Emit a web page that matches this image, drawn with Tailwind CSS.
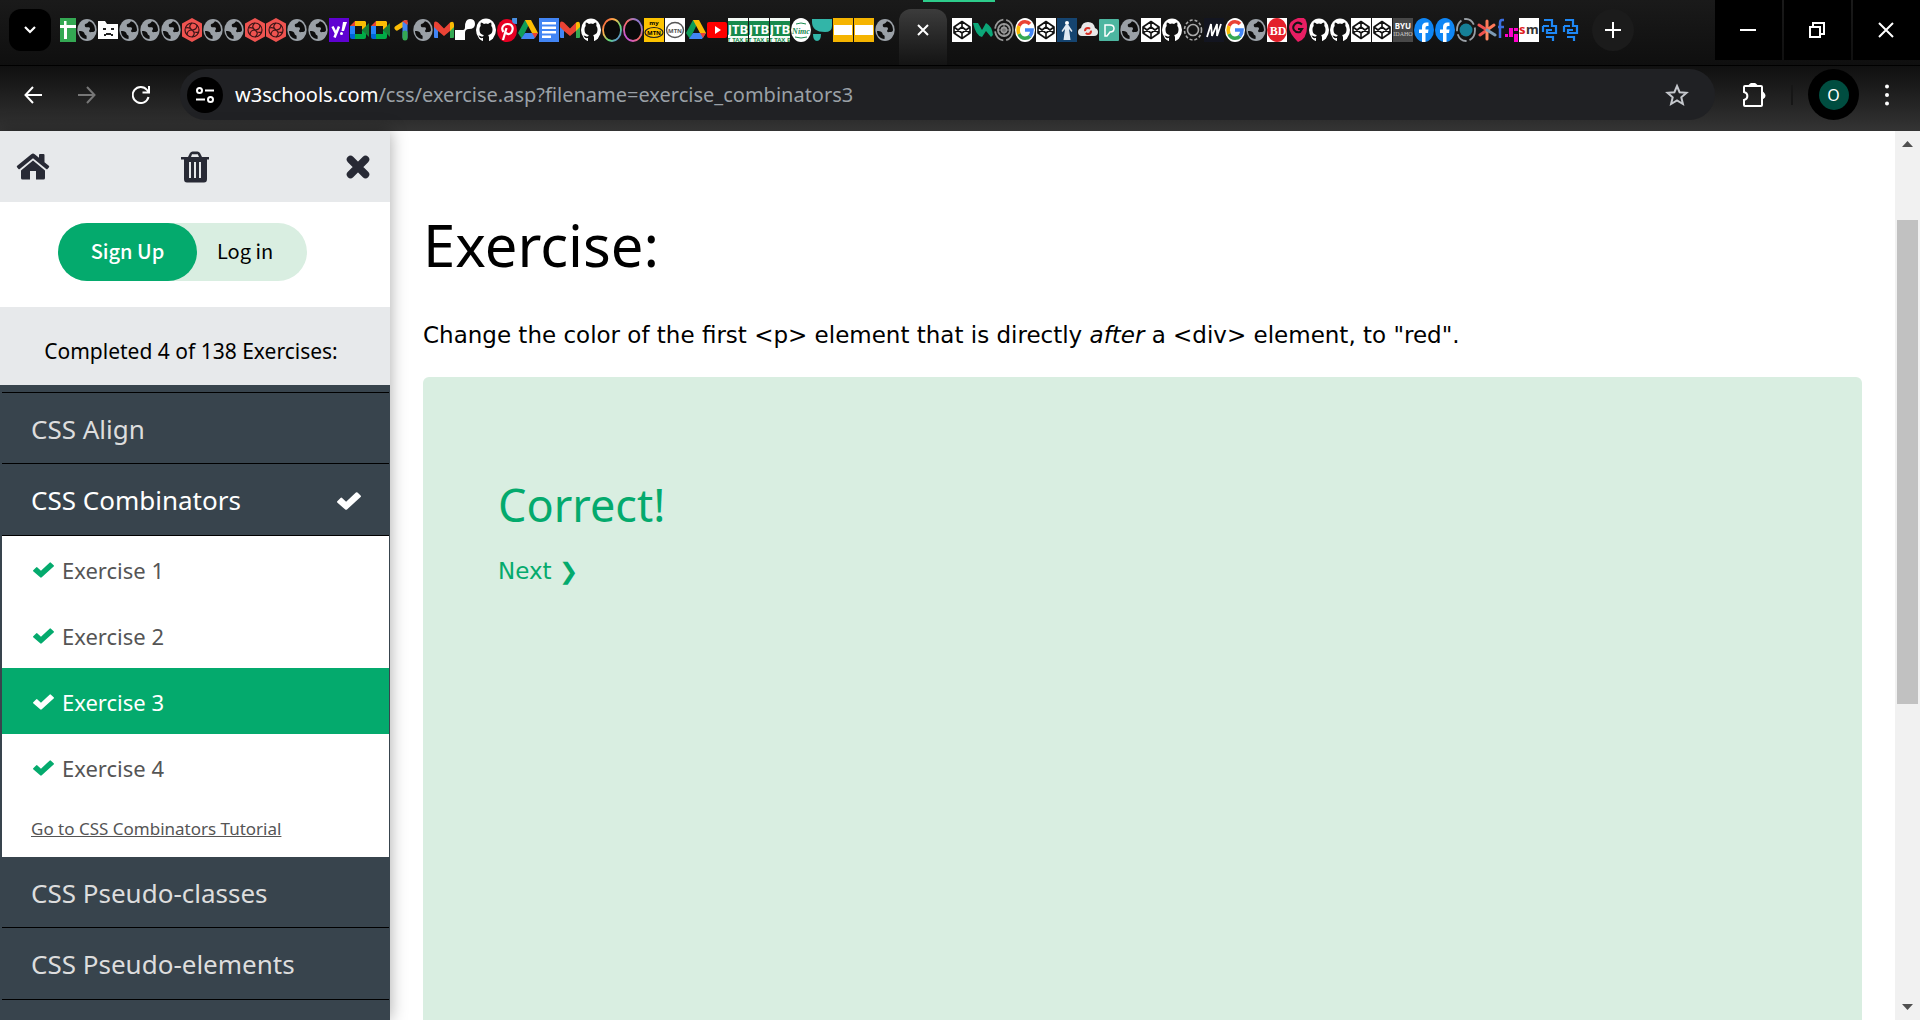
<!DOCTYPE html>
<html lang="en">
<head>
<meta charset="utf-8">
<meta name="viewport" content="width=device-width, initial-scale=1">
<title>CSS Exercise</title>
<script src="https://cdn.jsdelivr.net/npm/@tailwindcss/browser@4"></script>
</head>
<body class="flex h-screen flex-col overflow-hidden bg-white font-['Noto_Sans',sans-serif] text-black">

<!-- Gradients shared by the favicons -->
<svg class="absolute size-0" aria-hidden="true">
  <linearGradient id="rainbow" x1="0" y1="0" x2="1" y2="1"><stop offset="0" stop-color="#f44336"/><stop offset=".35" stop-color="#ffb74d"/><stop offset=".65" stop-color="#64dd7a"/><stop offset="1" stop-color="#5c6bff"/></linearGradient>
  <linearGradient id="sunset" x1="1" y1="0" x2="0" y2="1"><stop offset="0" stop-color="#5c7cff"/><stop offset=".5" stop-color="#ff6f61"/><stop offset="1" stop-color="#b14dff"/></linearGradient>
</svg>

<!-- Favicon sprite -->
<svg class="hidden" aria-hidden="true">
  <symbol id="globe" viewBox="0 0 20 24"><ellipse cx="10" cy="12" rx="9.700" ry="11" fill="#9aa0a6"/><path d="M2 13c2 0 4 .3 5 1.500.8 1 .2 1.800 1.500 2.500 1.500.6 1.200 1.500 1 4C5 20.500 2 17.500 2 13zM12 3.200c-1 .8-1 1.800-2.200 2.200-1.500.3-2.300.6-2 2.300.2 1 .8 1.500 2 1.500h2c1 0 1.500 1.200 1 2.200-.5.8-1 1.100-.6 2.200.4 1 1.800.4 3 .4 1.500 0 2.800-.5 2.800-2 0-4.600-2.500-8-6-8.800z" fill="#0e0e0e"/></symbol>
  <symbol id="sheets" viewBox="0 0 20 24"><path d="M0 0h16v24H0z" fill="#34a853"/><path d="M0 7h16v3H7v11H4V10H0zM4 3h2.500v4H4z" fill="#fff"/></symbol>
  <symbol id="sad" viewBox="0 0 20 24"><path d="M0 3h7l2 3h11v15H0z" fill="#fff"/><path d="M5 10h3v2H5zM13 10h3v2h-3zM6 18v-2h2v-1h5v1h2v2h-2v-1H8v1z" fill="#222"/></symbol>
  <symbol id="swirl" viewBox="0 0 20 24"><path d="M10 0l10 5.500v13L10 24 0 18.500v-13z" fill="#ef5350"/><g fill="none" stroke="#3b1517" stroke-width="1.200"><circle cx="10" cy="12" r="7"/><path d="M10 5c-3 2-3 5 0 7 3 2 3 5 0 7M3.500 10c3-1 5 0 6.500 2 1.500 2 4 3 6.500 2M5 17c0-3 2-5 5-5s5-2 5-5"/></g></symbol>
  <symbol id="yahoo" viewBox="0 0 20 24"><path d="M0 0h20v24H0z" fill="#5f01d1"/><path d="M3.500 8.500l3.500 7M10 8.500l-4.500 11" stroke="#fff" stroke-width="2.500"/><path d="M14 4h4l-3 9h-2.500z" fill="#fff"/><circle cx="12.500" cy="15.500" r="1.500" fill="#fff"/></symbol>
  <symbol id="meet" viewBox="0 0 20 24"><path d="M5 3v5H0z" fill="#ea4335"/><path d="M5 3h10l1 1v5l-4 3V8H5z" fill="#fbbc04"/><path d="M0 8h5v8H0z" fill="#2684fc"/><path d="M0 16h5v5H2q-2 0-2-2z" fill="#0066da"/><path d="M5 16h7v-4l4 3v4q0 2-2 2H5z" fill="#00ac47"/><path d="M12 12l7-7v14z" fill="#188038"/></symbol>
  <symbol id="one" viewBox="0 0 20 24"><path d="M5 10l8-5" stroke="#fbbc04" stroke-width="5" stroke-linecap="round"/><path d="M13 5v14" stroke="#4285f4" stroke-width="5" stroke-linecap="round"/><path d="M13 15v5" stroke="#34a853" stroke-width="5" stroke-linecap="round"/><path d="M10 3l5.500-1v5z" fill="#ea4335"/></symbol>
  <symbol id="gmail" viewBox="0 0 20 24"><path d="M0 6l4 3v11H1q-1 0-1-1z" fill="#4285f4"/><path d="M16 9l4-3v13q0 1-1 1h-3z" fill="#34a853"/><path d="M16 4.500q4-2 4 2V9l-4 4z" fill="#fbbc04"/><path d="M0 6q0-4 4-1.500l6 6 6-6V13l-6 5-6-5-4-4z" fill="#ea4335"/></symbol>
  <symbol id="route" viewBox="0 0 20 24"><path d="M0 22V12h8q2 0 2-3 0-8 5-8 5 0 5 5 0 5-6 5-4 0-4 4v7z" fill="#fff"/></symbol>
  <symbol id="github" viewBox="0 0 20 24"><ellipse cx="10" cy="12" rx="10" ry="11.500" fill="#fff"/><path d="M7 24v-4c-2.500.5-3.500-.5-4.500-2.500 2 0 2.500 1.500 4.500 1l.8-1.500C4.500 16.500 3.500 14.500 3.500 11.500c0-1.500.4-2.500 1.200-3.500-.3-1.200-.2-2.500.2-3.500 1.300 0 2.200.8 3 1.400q2.100-.6 4.200 0c.8-.6 1.700-1.400 3-1.400.4 1 .5 2.300.2 3.500.8 1 1.200 2 1.200 3.500 0 3-1 5-4.300 5.500l.8 2v5z" fill="#111"/></symbol>
  <symbol id="pinterest" viewBox="0 0 20 24"><ellipse cx="10" cy="12.500" rx="10" ry="11.500" fill="#e60023"/><path d="M6 22l3.500-12M6.500 14c-3-4 0-8 4-8 5 0 6 4 4.500 7.500s-5 3-6 1" fill="none" stroke="#fff" stroke-width="2.200"/><circle cx="19" cy="2" r="4" fill="#4a90e2"/></symbol>
  <symbol id="drive" viewBox="0 0 20 24"><path d="M7 2h6L4 21l-4-6z" fill="#0f9d58"/><path d="M7 2h6l7 13h-6z" fill="#fbbc04"/><path d="M3 21l4-6h13l-4 6z" fill="#4285f4"/><path d="M14 15h6l-3 5z" fill="#ea4335"/></symbol>
  <symbol id="docs" viewBox="0 0 20 24"><path d="M0 0h20v24H0z" fill="#4285f4"/><path d="M3 4h14v2.500H3zM3 8.500h14V11H3zM3 13h14v2.500H3zM3 17.500h9V20H3z" fill="#fff"/></symbol>
  <symbol id="ring" viewBox="0 0 20 24"><ellipse cx="10" cy="12" rx="9" ry="11" fill="#0a0a0a" stroke="url(#rainbow)" stroke-width="1.800"/></symbol>
  <symbol id="ring2" viewBox="0 0 20 24"><ellipse cx="10" cy="12" rx="9" ry="11" fill="#0a0a0a" stroke="url(#sunset)" stroke-width="1.800"/></symbol>
  <symbol id="mymtn" viewBox="0 0 20 24"><path d="M0 0h20v24H0z" fill="#fdc300"/><ellipse cx="10" cy="14.500" rx="9" ry="5" fill="none" stroke="#222" stroke-width="1.200"/><text x="10" y="7" font-size="6" font-weight="700" text-anchor="middle">my</text><text x="10" y="17" font-size="6" font-weight="700" text-anchor="middle">MTN</text></symbol>
  <symbol id="mtn" viewBox="0 0 20 24"><path d="M0 0h20v24H0z" fill="#fff"/><ellipse cx="10" cy="12" rx="8.500" ry="7.500" fill="none" stroke="#555" stroke-width="1.400"/><text x="10" y="14.500" font-size="6" font-weight="700" fill="#555" text-anchor="middle">MTN</text></symbol>
  <symbol id="youtube" viewBox="0 0 20 24"><rect y="4" width="20" height="16" rx="2" fill="#f00"/><path d="M8 8l6 4-6 4z" fill="#fff"/></symbol>
  <symbol id="jtb" viewBox="0 0 20 24"><path d="M0 0h20v24H0z" fill="#f4faf6"/><path d="M0 3h20v15H0z" fill="#178a4c"/><text x="10" y="16" font-size="13" font-weight="700" fill="#fff" text-anchor="middle">JTB</text><text x="10" y="23.500" font-size="6" font-weight="700" fill="#178a4c" text-anchor="middle">T TAX B</text></symbol>
  <symbol id="nimc" viewBox="0 0 20 24"><ellipse cx="10" cy="12" rx="10" ry="12" fill="#fff"/><text x="10" y="16" font-size="8" font-weight="700" font-style="italic" fill="#1a8a50" text-anchor="middle" font-family="Liberation Serif">Nimc</text><path d="M4 19q6 2 12 0M5 6q5-2 10 0" stroke="#1a8a50" fill="none"/></symbol>
  <symbol id="teal" viewBox="0 0 20 24"><path d="M0 1h20v7q0 6-7 6Q0 14 0 4zM1 16h8q0 7-4 7-4 0-4-7z" fill="#32b5a8"/></symbol>
  <symbol id="slides" viewBox="0 0 20 24"><path d="M0 0h20v24H0z" fill="#f5b400"/><path d="M1 7h18v10H1z" fill="#fff"/></symbol>
  <symbol id="codepen" viewBox="0 0 20 24"><path d="M0 0h20v24H0z" fill="#fff"/><path d="M10 3.500l8 5.500v6l-8 5.500L2 15V9zM10 3.500V9M10 15v5.500M2 9l8 6 8-6M2 15l8-6 8 6" fill="none" stroke="#111" stroke-width="1.600" stroke-linejoin="round"/></symbol>
  <symbol id="wave" viewBox="0 0 20 24"><path d="M0 5h5l4 7 4-7q6 3 7 12l-2 2-5-6-4 6q-6-1-9-14z" fill="#0ca678"/></symbol>
  <symbol id="target" viewBox="0 0 20 24"><g fill="none" stroke="#999" stroke-width="1.800"><ellipse cx="10" cy="12" rx="9" ry="10.500" stroke-dasharray="13 3"/><circle cx="10" cy="12" r="6"/><circle cx="10" cy="12" r="2.500"/><path d="M10 5v14M3 12h14" stroke-width="1"/></g></symbol>
  <symbol id="google" viewBox="0 0 20 24"><ellipse cx="10" cy="12" rx="10" ry="12" fill="#fff"/><g fill="none" stroke-width="3.600"><path d="M4 8q2-4.200 6-4.200 3 0 5 2.200" stroke="#ea4335"/><path d="M3.900 8q-1.500 4 0 8" stroke="#fbbc04"/><path d="M4 16q2 4.200 6 4.200 3 0 5-2" stroke="#34a853"/><path d="M10 12h7q0 4-2.200 6.300" stroke="#4285f4"/></g></symbol>
  <symbol id="statue" viewBox="0 0 20 24"><path d="M0 0h20v24H0z" fill="#154470"/><circle cx="10" cy="5" r="2" fill="#fff"/><path d="M8.500 7h3l4 6-1 1-2.500-3 1.500 11h-7l1.500-11-2.500 3-1-1z" fill="#dfe8f2"/></symbol>
  <symbol id="cloud" viewBox="0 0 20 24"><path d="M4 18q-4 0-4-4 0-3 3-4 1-6 7-6t7 6q3 1 3 4 0 4-4 4z" fill="#e8e8e8"/><circle cx="10" cy="13" r="3" fill="none" stroke="#d93025" stroke-width="2" stroke-dasharray="7 2"/></symbol>
  <symbol id="pad" viewBox="0 0 20 24"><rect y="1" width="20" height="22" rx="1" fill="#4db6a0"/><path d="M6 18V7h5q4 0 4 3.500T11 14l-3 4z" fill="none" stroke="#fff" stroke-width="1.500"/></symbol>
  <symbol id="dotted" viewBox="0 0 20 24"><g fill="none" stroke="#aaa" stroke-width="1.600"><ellipse cx="10" cy="12" rx="8.500" ry="10" stroke-dasharray="3 2"/><circle cx="10" cy="12" r="5.500"/></g></symbol>
  <symbol id="em" viewBox="0 0 20 24"><path d="M0 0h20v24H0z" fill="#131520"/><path d="M3 19L7 6l1 12 5-12v12l4-12" fill="none" stroke="#fff" stroke-width="1.800"/></symbol>
  <symbol id="bd" viewBox="0 0 20 24"><path d="M0 0h20v24H0z" fill="#fff"/><ellipse cx="10" cy="12" rx="10" ry="12" fill="#e3202b"/><text x="11" y="16.500" font-size="12" font-weight="700" fill="#fff" text-anchor="middle" font-family="Liberation Serif">BD</text></symbol>
  <symbol id="pin" viewBox="0 0 20 24"><path d="M10 24Q1 15 1 9t9-9 9 9-9 15z" fill="#e91e63"/><path d="M14 6.500Q10 3 7 6t-1 6 6 2l2-3h-4" fill="none" stroke="#151515" stroke-width="2"/></symbol>
  <symbol id="byu" viewBox="0 0 20 24"><path d="M0 0h20v24H0z" fill="#484848"/><text x="10" y="11" font-size="8" font-weight="700" fill="#fff" text-anchor="middle">BYU</text><text x="10" y="17.500" font-size="6" fill="#ccc" text-anchor="middle" font-family="Liberation Serif">IDAHO</text></symbol>
  <symbol id="facebook" viewBox="0 0 20 24"><ellipse cx="10" cy="12" rx="10" ry="12" fill="#0f86f5"/><path d="M8 24v-9H5v-3.500h3V9q0-4.500 4.500-4.500h2V8H13q-1.500 0-1.500 1.800v1.700h3L14 15h-2.500v9z" fill="#fff"/></symbol>
  <symbol id="orb" viewBox="0 0 20 24"><ellipse cx="10" cy="12" rx="9" ry="11" fill="none" stroke="#9aa0a6" stroke-width="1.800" stroke-dasharray="12 3"/><circle cx="10" cy="12" r="6.500" fill="#168097"/></symbol>
  <symbol id="star" viewBox="0 0 20 24"><g stroke-width="3" stroke-linecap="round"><path d="M10 12V3M10 12l7-5" stroke="#ff7a59"/><path d="M10 12L2 7M10 12l-7 5" stroke="#ef5350"/><path d="M10 12v9" stroke="#ff8a65"/><path d="M10 12l8 5" stroke="#7e9bb5"/></g></symbol>
  <symbol id="fq" viewBox="0 0 20 24"><path d="M6 2H4q-2 0-2 3v15M0 9h6" fill="none" stroke="#3b6fe0" stroke-width="2.500"/><path d="M7 16h3v3H7zM11 10h4v9h-4zM16 10h4v3h-4zM16 16h4v8h-4z" fill="#f0c"/></symbol>
  <symbol id="sm" viewBox="0 0 20 24"><path d="M0 0h20v24H0z" fill="#fff"/><text x="0" y="16" font-size="13" font-weight="700" fill="#e02020">s</text><text x="7" y="16" font-size="13" font-weight="700" fill="#333">m</text></symbol>
  <symbol id="snake" viewBox="0 0 20 24"><path d="M4 2h8v6h4v7H7v-3h5M3 8v6M3 8h6M6 19h7v4" fill="none" stroke="#1e88f5" stroke-width="2.200"/></symbol>
  <symbol id="check" viewBox="0 0 24 18"><path d="M0 9.500L3.500 6q.8-.8 1.600 0l4 3.800L18.900.6q.8-.8 1.600 0L23.600 3.500q.8.800 0 1.600L10 17.400q-.9.800-1.800 0L.2 10.500z" fill="currentColor"/></symbol>
</svg>

<header>
  <!-- Tab strip -->
  <div class="relative flex h-[66px] items-start border-b border-black bg-linear-to-b from-[#1a1a1a] to-[#0f0f0f]">
    <div class="absolute left-[923px] top-0 h-[2px] w-[72px] bg-[#2dcc8b]"></div>
    <button aria-label="Search tabs" class="ml-[9px] mt-[9px] flex size-[42px] shrink-0 items-center justify-center rounded-xl bg-black">
      <svg class="h-2 w-3" viewBox="0 0 12 8" fill="none" stroke="#fff" stroke-width="2.200"><path d="M1 1l5 5 5-5"/></svg>
    </button>
    <nav aria-label="Tabs before the current one" class="ml-[9px] mt-[18px] flex gap-px [&_svg]:block [&_svg]:h-6 [&_svg]:w-5 [&>button:first-child]:w-4 [&>button:first-child]:overflow-hidden">
      <button aria-label="Sheets"><svg><use href="#sheets"/></svg></button>
      <button aria-label="Tab"><svg><use href="#globe"/></svg></button>
      <button aria-label="Unreachable page"><svg><use href="#sad"/></svg></button>
      <button aria-label="Tab"><svg><use href="#globe"/></svg></button>
      <button aria-label="Tab"><svg><use href="#globe"/></svg></button>
      <button aria-label="Tab"><svg><use href="#globe"/></svg></button>
      <button aria-label="Tab"><svg><use href="#swirl"/></svg></button>
      <button aria-label="Tab"><svg><use href="#globe"/></svg></button>
      <button aria-label="Tab"><svg><use href="#globe"/></svg></button>
      <button aria-label="Tab"><svg><use href="#swirl"/></svg></button>
      <button aria-label="Tab"><svg><use href="#swirl"/></svg></button>
      <button aria-label="Tab"><svg><use href="#globe"/></svg></button>
      <button aria-label="Tab"><svg><use href="#globe"/></svg></button>
      <button aria-label="Yahoo"><svg><use href="#yahoo"/></svg></button>
      <button aria-label="Meet"><svg><use href="#meet"/></svg></button>
      <button aria-label="Meet"><svg><use href="#meet"/></svg></button>
      <button aria-label="Google One"><svg><use href="#one"/></svg></button>
      <button aria-label="Tab"><svg><use href="#globe"/></svg></button>
      <button aria-label="Gmail"><svg><use href="#gmail"/></svg></button>
      <button aria-label="Tab"><svg><use href="#route"/></svg></button>
      <button aria-label="GitHub"><svg><use href="#github"/></svg></button>
      <button aria-label="Pinterest"><svg><use href="#pinterest"/></svg></button>
      <button aria-label="Drive"><svg><use href="#drive"/></svg></button>
      <button aria-label="Docs"><svg><use href="#docs"/></svg></button>
      <button aria-label="Gmail"><svg><use href="#gmail"/></svg></button>
      <button aria-label="GitHub"><svg><use href="#github"/></svg></button>
      <button aria-label="Tab"><svg><use href="#ring"/></svg></button>
      <button aria-label="Tab"><svg><use href="#ring2"/></svg></button>
      <button aria-label="MyMTN"><svg><use href="#mymtn"/></svg></button>
      <button aria-label="MTN"><svg><use href="#mtn"/></svg></button>
      <button aria-label="Drive"><svg><use href="#drive"/></svg></button>
      <button aria-label="YouTube"><svg><use href="#youtube"/></svg></button>
      <button aria-label="JTB"><svg><use href="#jtb"/></svg></button>
      <button aria-label="JTB"><svg><use href="#jtb"/></svg></button>
      <button aria-label="JTB"><svg><use href="#jtb"/></svg></button>
      <button aria-label="NIMC"><svg><use href="#nimc"/></svg></button>
      <button aria-label="Tab"><svg><use href="#teal"/></svg></button>
      <button aria-label="Slides"><svg><use href="#slides"/></svg></button>
      <button aria-label="Slides"><svg><use href="#slides"/></svg></button>
      <button aria-label="Tab"><svg><use href="#globe"/></svg></button>
    </nav>
    <div class="ml-1 mt-[9px] flex h-14 w-12 shrink-0 justify-center rounded-t-xl bg-linear-to-b from-[#3c3c3c] to-[#141414] pt-[15px]">
      <button aria-label="Close tab" class="size-3"><svg viewBox="0 0 12 12" stroke="#fff" stroke-width="2"><path d="M1 1l10 10M11 1L1 11"/></svg></button>
    </div>
    <nav aria-label="Tabs after the current one" class="ml-[5px] mt-[18px] flex gap-px [&_svg]:block [&_svg]:h-6 [&_svg]:w-5">
      <button aria-label="CodePen"><svg><use href="#codepen"/></svg></button>
      <button aria-label="Tab"><svg><use href="#wave"/></svg></button>
      <button aria-label="Tab"><svg><use href="#target"/></svg></button>
      <button aria-label="Google"><svg><use href="#google"/></svg></button>
      <button aria-label="CodePen"><svg><use href="#codepen"/></svg></button>
      <button aria-label="Tab"><svg><use href="#statue"/></svg></button>
      <button aria-label="Tab"><svg><use href="#cloud"/></svg></button>
      <button aria-label="Tab"><svg><use href="#pad"/></svg></button>
      <button aria-label="Tab"><svg><use href="#globe"/></svg></button>
      <button aria-label="CodePen"><svg><use href="#codepen"/></svg></button>
      <button aria-label="GitHub"><svg><use href="#github"/></svg></button>
      <button aria-label="Tab"><svg><use href="#dotted"/></svg></button>
      <button aria-label="Tab"><svg><use href="#em"/></svg></button>
      <button aria-label="Google"><svg><use href="#google"/></svg></button>
      <button aria-label="Tab"><svg><use href="#globe"/></svg></button>
      <button aria-label="BD"><svg><use href="#bd"/></svg></button>
      <button aria-label="Tab"><svg><use href="#pin"/></svg></button>
      <button aria-label="GitHub"><svg><use href="#github"/></svg></button>
      <button aria-label="GitHub"><svg><use href="#github"/></svg></button>
      <button aria-label="CodePen"><svg><use href="#codepen"/></svg></button>
      <button aria-label="CodePen"><svg><use href="#codepen"/></svg></button>
      <button aria-label="BYU Idaho"><svg><use href="#byu"/></svg></button>
      <button aria-label="Facebook"><svg><use href="#facebook"/></svg></button>
      <button aria-label="Facebook"><svg><use href="#facebook"/></svg></button>
      <button aria-label="Tab"><svg><use href="#orb"/></svg></button>
      <button aria-label="Tab"><svg><use href="#star"/></svg></button>
      <button aria-label="Tab"><svg><use href="#fq"/></svg></button>
      <button aria-label="Tab"><svg><use href="#sm"/></svg></button>
      <button aria-label="Tab"><svg><use href="#snake"/></svg></button>
      <button aria-label="Tab"><svg><use href="#snake"/></svg></button>
    </nav>
    <button aria-label="New tab" class="ml-[11px] mt-[9px] flex size-[42px] shrink-0 items-center justify-center rounded-full bg-[#1b1b1b]">
      <svg class="size-4" viewBox="0 0 16 16" stroke="#fff" stroke-width="2"><path d="M8 0v16M0 8h16"/></svg>
    </button>
    <div class="ml-auto flex shrink-0 gap-[2px] [&>button]:flex [&>button]:h-[60px] [&>button]:w-[67px] [&>button]:items-center [&>button]:justify-center [&>button]:bg-black [&>button]:pr-[2px]">
      <button aria-label="Minimize"><svg class="size-4" viewBox="0 0 16 16" stroke="#fff" stroke-width="2"><path d="M0 8h16"/></svg></button>
      <button aria-label="Restore"><svg class="size-4" viewBox="0 0 16 16" fill="none" stroke="#fff" stroke-width="2"><path d="M1 5h10v10H1zM4 4V1h11v11h-3"/></svg></button>
      <button aria-label="Close"><svg class="size-4" viewBox="0 0 16 16" stroke="#fff" stroke-width="2"><path d="M1 1l14 14M15 1L1 15"/></svg></button>
    </div>
  </div>

  <!-- Toolbar -->
  <div class="flex h-[65px] items-start bg-linear-to-b from-[#101010] to-[#343434] pt-[3px]">
    <div class="flex h-[51px] items-center gap-9 pl-6 pr-[30px] [&_svg]:size-[18px]">
      <button aria-label="Back"><svg viewBox="0 0 18 18" fill="none" stroke="#fff" stroke-width="2"><path d="M18 9H2M9 1L1.500 9 9 17"/></svg></button>
      <button aria-label="Forward"><svg viewBox="0 0 18 18" fill="none" stroke="#777" stroke-width="2"><path d="M0 9h16M9 1l7.500 8L9 17"/></svg></button>
      <button aria-label="Reload"><svg viewBox="0 0 18 18" fill="none" stroke="#fff" stroke-width="2"><path d="M16.500 11A8 8 0 1 1 15 4l2 2.500M17 0v6.500h-6.500"/></svg></button>
    </div>
    <div class="flex h-[51px] flex-1 items-center rounded-full bg-[#202124] pl-[7px] pr-[26px]">
      <button aria-label="View site information" class="flex size-9 shrink-0 items-center justify-center rounded-full bg-black">
        <svg class="h-4 w-[18px]" viewBox="0 0 18 16" fill="none" stroke="#fff" stroke-width="2"><circle cx="3.500" cy="3.500" r="2.500"/><path d="M9 3.500h9M0 12.500h9"/><circle cx="14.500" cy="12.500" r="2.500"/></svg>
      </button>
      <div role="textbox" aria-label="Address" class="ml-3 flex-1 whitespace-nowrap text-xl text-[#9aa0a6]"><span class="text-white">w3schools.com</span>/css/exercise.asp?filename=exercise_combinators3</div>
      <button aria-label="Bookmark this tab"><svg class="size-6" viewBox="0 0 24 24" fill="none" stroke="#c4c7cc" stroke-width="2"><path d="M12 3l2.600 6.200 6.900.6-5.200 4.500 1.600 6.700-5.900-3.600L6.100 21l1.600-6.700-5.200-4.500 6.900-.6z"/></svg></button>
    </div>
    <div class="flex h-[51px] items-center">
      <button aria-label="Extensions" class="ml-[27px]"><svg class="size-6" viewBox="0 0 24 24" fill="none" stroke="#fff" stroke-width="2"><path d="M3 3h16q1 0 1 1v18q0 1-1 1H3q-1 0-1-1v-5c4.500-1 4.500-7 0-8V4q0-1 1-1z"/><path d="M8 2q3-3 6 0zM21 10q3 3 0 5z" fill="#fff"/></svg></button>
      <div class="ml-[25px] h-5 w-[2px] bg-[#161616]"></div>
      <button aria-label="Profile" class="ml-[15px] flex size-[51px] items-center justify-center rounded-full bg-black"><span class="flex size-[30px] items-center justify-center rounded-full bg-[#004d40] text-base text-white">O</span></button>
      <button aria-label="Menu" class="ml-[26px] mr-[31px]"><svg class="h-[22px] w-1" viewBox="0 0 4 22" fill="#fff"><circle cx="2" cy="2.500" r="2"/><circle cx="2" cy="11" r="2"/><circle cx="2" cy="19.500" r="2"/></svg></button>
    </div>
  </div>
</header>

<div class="flex min-h-0 flex-1">
  <!-- Exercise menu -->
  <aside class="z-10 flex w-[390px] shrink-0 flex-col bg-[#38444d] shadow-[0_0_16px_rgba(0,0,0,0.35)]">
    <div class="flex h-[71px] shrink-0 items-center justify-between bg-[#e7e9eb] pl-4 pr-5 text-[#282a35]">
      <a href="#home" aria-label="Home"><svg class="h-7 w-[34px]" viewBox="0 0 34 28" fill="currentColor"><path d="M17 7.500L29 17.500V25q0 1.500-1.500 1.500H20V18h-6v8.500H6.500Q5 26.500 5 25v-7.500z"/><path d="M2.500 16L1 14.200q-.6-.8.200-1.500L15.300 1.200q1.700-1.400 3.400 0L23 4.800V2q0-1 1-1h3.500q1 0 1 1v7.300l4.300 3.400q.8.700.2 1.500L31.500 16q-.6.600-1.300 0L17 5.200 3.800 16q-.7.600-1.300 0z"/></svg></a>
      <button aria-label="Reset progress" class="mr-[6px]"><svg class="h-8 w-7" viewBox="0 0 28 32"><path d="M0 6h7l2-4q1-1.500 2.500-1.500h5Q18 .5 19 2l2 4h7v2.500h-2V28q0 3.500-3 3.500H6q-3 0-3-3.500V8.500H0zM10 6h8l-1.200-2.700H11z" fill="currentColor" fill-rule="evenodd"/><path d="M8 11h2v16H8zM13 11h2v16h-2zM18 11h2v16h-2z" fill="#e7e9eb"/></svg></button>
      <button aria-label="Close menu"><svg class="size-6" viewBox="0 0 24 24"><path d="M4.500 4.500l15 15M19.500 4.500l-15 15" stroke="currentColor" stroke-width="7.500" stroke-linecap="round"/></svg></button>
    </div>
    <div class="h-[105px] shrink-0 bg-white pl-[58px] pt-[21px] font-['Noto_Sans_CJK_SC',sans-serif]">
      <div class="flex h-[58px] w-[249px] rounded-full bg-[#d9eee1] text-xl">
        <a href="#signup" class="flex w-[139px] items-center justify-center rounded-full bg-[#04aa6d] pb-[2px] font-medium text-white">Sign Up</a>
        <a href="#login" class="flex items-center pb-[2px] pl-5">Log in</a>
      </div>
    </div>
    <div class="flex h-[78px] shrink-0 items-center justify-center bg-[#e7e9eb] pr-2 pt-3 text-[21px]">Completed 4 of 138 Exercises:</div>
    <nav aria-label="Exercises" class="ml-[2px] mr-px min-h-0 flex-1 overflow-hidden pt-[7px] text-[26px] text-[#ddd]">
      <a href="#align" class="flex h-[72px] items-center border-y border-black pl-[29px] pt-[2px]">CSS Align</a>
      <a href="#combinators" class="flex h-[72px] items-center justify-between border-b border-black pl-[29px] pr-7 pt-[2px] text-white">CSS Combinators<svg class="h-[18px] w-6"><use href="#check"/></svg></a>
      <div class="bg-white text-[22px] text-[#555] [&_svg]:h-4 [&_svg]:w-[21px]">
        <a href="#e1" class="flex h-[66px] items-center gap-2 pl-[31px] pt-[2px]"><svg class="text-[#04aa6d]"><use href="#check"/></svg>Exercise 1</a>
        <a href="#e2" class="flex h-[66px] items-center gap-2 pl-[31px] pt-[2px]"><svg class="text-[#04aa6d]"><use href="#check"/></svg>Exercise 2</a>
        <a href="#e3" class="flex h-[66px] items-center gap-2 bg-[#04aa6d] pl-[31px] pt-[2px] text-white"><svg><use href="#check"/></svg>Exercise 3</a>
        <a href="#e4" class="flex h-[66px] items-center gap-2 pl-[31px] pt-[2px]"><svg class="text-[#04aa6d]"><use href="#check"/></svg>Exercise 4</a>
        <a href="#tutorial" class="flex h-[57px] items-center pl-[29px] text-[17px] underline">Go to CSS Combinators Tutorial</a>
      </div>
      <a href="#pseudo-classes" class="flex h-[71px] items-center border-b border-black pl-[29px] pt-[2px]">CSS Pseudo-classes</a>
      <a href="#pseudo-elements" class="flex h-[72px] items-center border-b border-black pl-[29px] pt-[2px]">CSS Pseudo-elements</a>
    </nav>
  </aside>

  <main class="flex min-w-0 flex-1 flex-col px-[33px] pt-[72px]">
    <h1 class="text-[58px] leading-[84px]">Exercise:</h1>
    <p class="mt-8 font-['DejaVu_Sans',sans-serif] text-[23px] leading-8">Change the color of the first &lt;p&gt; element that is directly <em>after</em> a &lt;div&gt; element, to "red".</p>
    <section class="mt-[26px] flex-1 rounded-t-md bg-[#d9eee1] pl-[75px] pt-24 text-[#04aa6d]">
      <h2 class="text-[45px] leading-[64px]">Correct!</h2>
      <a href="#next" class="mt-[18px] inline-block font-['DejaVu_Sans',sans-serif] text-[23px] leading-8">Next ❯</a>
    </section>
  </main>

  <!-- Page scrollbar -->
  <div class="flex w-[25px] shrink-0 flex-col items-center bg-[#f1f1f1] py-[10px]">
    <svg class="h-[6px] w-[11px]" viewBox="0 0 11 6"><path d="M0 6l5.500-6L11 6z" fill="#505050"/></svg>
    <div class="flex w-[21px] flex-1 flex-col pb-[15px] pt-[73px]"><div class="h-[63%] bg-[#c1c1c1]"></div></div>
    <svg class="h-[6px] w-[11px]" viewBox="0 0 11 6"><path d="M0 0h11L5.500 6z" fill="#505050"/></svg>
  </div>
</div>
</body>
</html>
